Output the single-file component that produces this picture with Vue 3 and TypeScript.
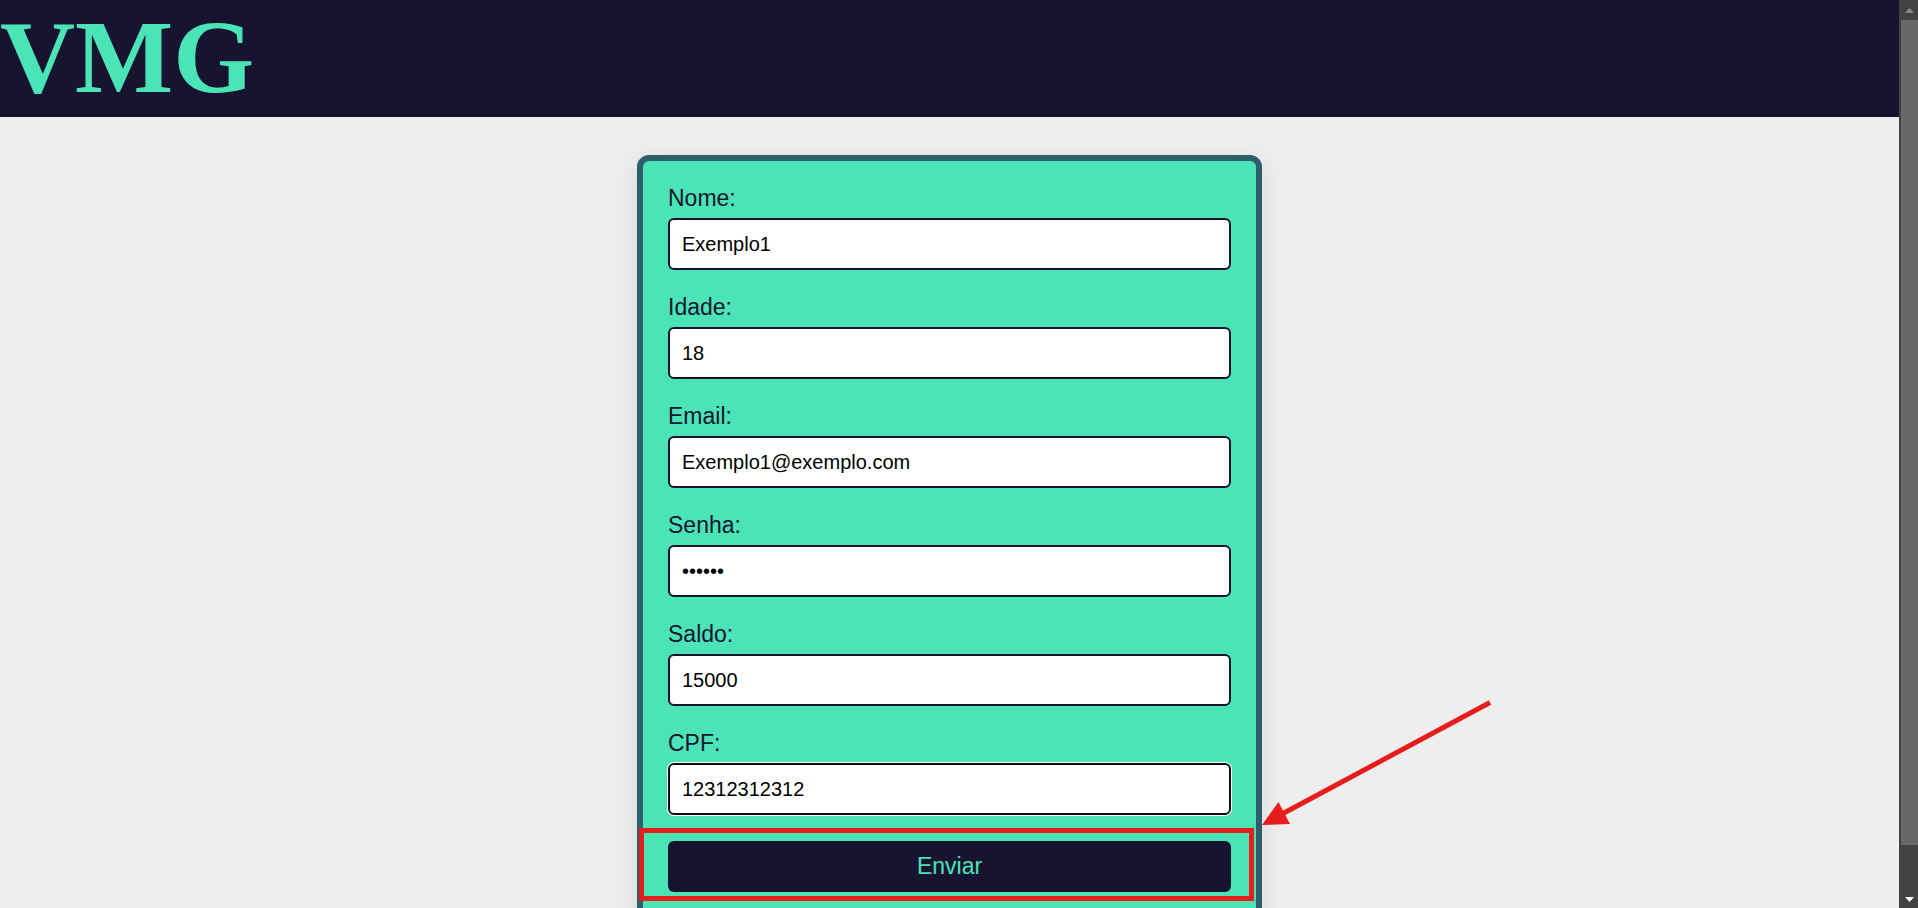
<script setup lang="ts">
import { ref } from 'vue'

interface Field {
  id: string
  label: string
  type: string
  value: string
  active?: boolean
}

const fields = ref<Field[]>([
  { id: 'nome', label: 'Nome:', type: 'text', value: 'Exemplo1' },
  { id: 'idade', label: 'Idade:', type: 'text', value: '18' },
  { id: 'email', label: 'Email:', type: 'email', value: 'Exemplo1@exemplo.com' },
  { id: 'senha', label: 'Senha:', type: 'password', value: '123456' },
  { id: 'saldo', label: 'Saldo:', type: 'text', value: '15000' },
  { id: 'cpf', label: 'CPF:', type: 'text', value: '12312312312', active: true },
])
</script>

<template>
  <div class="window">
    <div class="page">
      <header class="header">
        <h1 class="logo">VMG</h1>
      </header>
      <main class="main">
        <form class="form" @submit.prevent>
          <div class="fields">
            <div v-for="field in fields" :key="field.id" class="field">
              <label class="label" :for="field.id">{{ field.label }}</label>
              <input
                :id="field.id"
                v-model="field.value"
                class="input"
                :class="{ active: field.active }"
                :type="field.type"
              />
            </div>
          </div>
          <div class="submit">
            <button class="button" type="submit">Enviar</button>
            <span class="highlight" aria-hidden="true"></span>
            <svg class="arrow" width="230" height="128" viewBox="0 0 230 128" aria-hidden="true">
              <path d="M21 114.500 228 3.500" fill="none" stroke="#e71d1d" stroke-width="5" />
              <path d="M0 126 16.500 103 28 125Z" fill="#e71d1d" />
            </svg>
          </div>
        </form>
      </main>
    </div>
    <div class="scrollbar" aria-hidden="true">
      <svg class="cap" viewBox="0 0 19 20"><path d="M6 13h9L10.500 8Z" fill="#8c8c8c" /></svg>
      <div class="track"><div class="thumb"></div></div>
      <svg class="cap" viewBox="0 0 19 20"><path d="M6 9h9L10.500 14Z" fill="#fff" /></svg>
    </div>
  </div>
</template>

<style>
body {
  margin: 0;
  background: #eee;
}
</style>

<style scoped>
.window {
  display: grid;
  grid-template-columns: minmax(0, 1fr) 19px;
  height: 100vh;
  font-family: "Liberation Sans", Arial, sans-serif;
}

.page {
  overflow: auto;
  scrollbar-width: none;
  background: #eee;
}

.header {
  padding-bottom: 4px;
  background: #171431;
}

.logo {
  margin: 0;
  color: #4ae4b7;
  font: bold 104px/113px "Liberation Serif", "Times New Roman", serif;
}

.main {
  display: flex;
  justify-content: center;
  padding: 38px 0;
}

.form {
  box-sizing: border-box;
  display: flex;
  flex-direction: column;
  gap: 26px;
  width: 100%;
  max-width: 625px;
  padding: 25px;
  border: 6px solid #2c5f69;
  border-radius: 12px;
  background: #4ae4b7;
  box-shadow: 0 5px 25px rgba(0, 0, 0, 0.1);
}

.fields {
  display: flex;
  flex-direction: column;
  gap: 25px;
}

.field {
  display: flex;
  flex-direction: column;
  gap: 8px;
}

.label {
  color: #171431;
  font-size: 23px;
  line-height: 24px;
}

.input {
  box-sizing: border-box;
  width: 100%;
  height: 52px;
  padding: 0 12px;
  border: 2px solid #171431;
  border-radius: 6px;
  outline: none;
  background: #fff;
  color: #000;
  font: 20px "Liberation Sans", Arial, sans-serif;
}

.input.active,
.input:focus {
  border-color: #101010;
  box-shadow: 0 0 0 1px #fff;
}

.submit {
  position: relative;
}

.button {
  display: block;
  width: 100%;
  height: 51px;
  padding: 0;
  border: 0;
  border-radius: 6px;
  background: #171431;
  color: #4ae4b7;
  font: 23px "Liberation Sans", Arial, sans-serif;
  cursor: pointer;
}

.highlight {
  position: absolute;
  inset: -13px -23px -9px -29px;
  border: 5px solid #e71d1d;
  pointer-events: none;
}

.arrow {
  position: absolute;
  left: calc(100% + 31px);
  top: -142px;
  pointer-events: none;
}

.scrollbar {
  display: flex;
  flex-direction: column;
  background: #424242;
}

.cap {
  display: block;
  width: 19px;
  height: 20px;
}

.track {
  flex: 1;
  padding-left: 2px;
}

.thumb {
  height: 95%;
  background: #686868;
}
</style>
